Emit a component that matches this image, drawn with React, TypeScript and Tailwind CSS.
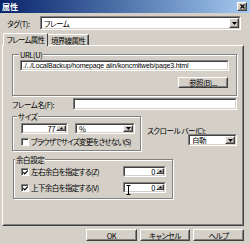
import React from "react";

const FONT = "font-['Noto_Sans_CJK_JP',sans-serif] [font-feature-settings:'palt']";

function Sunken({ className = "", inner = "", children }: { className?: string; inner?: string; children?: React.ReactNode }) {
  return (
    <div className={`border border-t-[#808080] border-l-[#808080] border-b-white border-r-white ${className}`}>
      <div className={`h-full w-full border border-t-[#404040] border-l-[#404040] border-b-[#d4d0c8] border-r-[#d4d0c8] bg-white flex items-center overflow-hidden ${inner}`}>
        {children}
      </div>
    </div>
  );
}

function Raised({ className = "", children }: { className?: string; children?: React.ReactNode }) {
  return (
    <div className={`border border-t-[#ffffff] border-l-[#ffffff] border-b-[#404040] border-r-[#404040] bg-[#d4d0c8] ${className}`}>
      <div className="h-full w-full border border-t-[#d4d0c8] border-l-[#d4d0c8] border-b-[#808080] border-r-[#808080] flex items-center justify-center">
        {children}
      </div>
    </div>
  );
}

function Arrow({ up = false, w = 5 }: { up?: boolean; w?: number }) {
  const h = Math.ceil(w / 2);
  return (
    <svg width={w} height={h} viewBox={`0 0 ${w} ${h}`} className="block">
      {up ? (
        <polygon points={`0,${h} ${w},${h} ${w / 2},0`} fill="#000" />
      ) : (
        <polygon points={`0,0 ${w},0 ${w / 2},${h}`} fill="#000" />
      )}
    </svg>
  );
}

function Combo({ className = "", text }: { className?: string; text: string }) {
  return (
    <Sunken className={className} inner="justify-between">
      <span className="pl-[2px] whitespace-nowrap">{text}</span>
      <Raised className="w-[10px] h-full shrink-0">
        <Arrow w={5} />
      </Raised>
    </Sunken>
  );
}

function Spinner({ className = "" }: { className?: string }) {
  return (
    <div className={`flex flex-col ${className}`}>
      <Raised className="flex-1">
        <Arrow up w={3} />
      </Raised>
      <Raised className="flex-1">
        <Arrow w={3} />
      </Raised>
    </div>
  );
}

function NumberField({ className = "", value, inputW, spinW }: { className?: string; value: string; inputW: string; spinW: string }) {
  return (
    <div className={`flex ${className}`}>
      <Sunken className={`${inputW} h-full`} inner="justify-end">
        <span className="pr-[1px]">{value}</span>
        <Spinner className={`${spinW} h-full shrink-0`} />
      </Sunken>
    </div>
  );
}

function Check({ checked }: { checked: boolean }) {
  return (
    <div className="w-[8px] h-[8px] border border-t-[#808080] border-l-[#808080] border-b-white border-r-white bg-white shadow-[inset_1px_1px_0_#404040] flex items-center justify-center shrink-0">
      {checked && (
        <svg width="5" height="5" viewBox="0 0 5 5" className="block ml-[1px] mt-[1px]">
          <path d="M0.3 2.2 L1.8 3.8 L4.7 0.6" stroke="#000" strokeWidth="1.2" fill="none" />
        </svg>
      )}
    </div>
  );
}

function Group({ className = "", label, legendClass = "", children }: { className?: string; label: string; legendClass?: string; children?: React.ReactNode }) {
  return (
    <fieldset className={`min-w-0 border border-[#808080] shadow-[inset_1px_1px_0_#ffffff,1px_1px_0_#ffffff] ${className}`}>
      <legend className={`bg-[#d4d0c8] px-[1px] leading-[9px] ${legendClass}`}>{label}</legend>
      {children}
    </fieldset>
  );
}

export default function App() {
  return (
    <div className={`w-[250px] h-[244px] bg-[#d4d0c8] overflow-hidden text-black text-[7.5px] leading-[9px] tracking-[-0.4px] flex flex-col relative ${FONT}`}>
      {/* Title bar */}
      <div className="h-[13px] shrink-0 flex items-center bg-gradient-to-r from-[#0a246a] to-[#a6caf0] pl-[2px] pr-[3px]">
        <span className="text-white font-bold text-[8px] leading-[9px] tracking-normal">属性</span>
        <Raised className="ml-auto w-[10px] h-[9px]">
          <svg width="5" height="5" viewBox="0 0 5 5" className="block">
            <path d="M0.5 0.5 L4.5 4.5 M4.5 0.5 L0.5 4.5" stroke="#000" strokeWidth="1.3" />
          </svg>
        </Raised>
      </div>

      {/* Tag row */}
      <div className="mt-[3px] h-[14px] flex items-center shrink-0">
        <span className="ml-[7px] w-[33px] whitespace-nowrap">タグ(T):</span>
        <Combo className="w-[201px] h-[14px]" text="フレーム" />
      </div>

      {/* Tabs */}
      <div className="mt-[3px] h-[13px] flex items-end pl-[3px] relative z-10 shrink-0">
        <div className="w-[45px] h-[13px] bg-[#d4d0c8] border-t border-l border-t-white border-l-white border-r border-r-[#404040] rounded-tl-[2px] rounded-tr-[1px] flex items-center justify-center pb-[1px]">
          <span className="whitespace-nowrap tracking-[-0.7px]">フレーム属性</span>
        </div>
        <div className="w-[41px] h-[11px] mb-[1px] bg-[#d4d0c8] border-t border-t-white border-r border-r-[#404040] rounded-tr-[1px] flex items-center justify-center shadow-[inset_-1px_0_0_#808080]">
          <span className="whitespace-nowrap tracking-[-0.7px]">境界線属性</span>
        </div>
      </div>

      {/* Panel */}
      <div className="-mt-[1px] ml-[2px] w-[242px] h-[181px] shrink-0 border border-t-white border-l-white border-b-[#404040] border-r-[#404040]">
        <div className="w-full h-full border border-t-[#d4d0c8] border-l-[#d4d0c8] border-b-[#808080] border-r-[#808080] flex flex-col">
          {/* URL group */}
          <Group className="mt-[3px] ml-[8px] w-[225px] h-[46px] px-[7px] flex flex-col" label="URL(U)" legendClass="-ml-[1px]">
            <Sunken className="mt-[1px] w-[209px] h-[11px]">
              <span className="pl-[1px] whitespace-nowrap text-[7px] tracking-[-0.15px] font-['Liberation_Sans',sans-serif]">./../LocalBackup/homepage aiin/koncmitweb/page3.html</span>
            </Sunken>
            <div className="flex justify-end mt-[6px]">
              <Raised className="w-[50px] h-[11px] mr-[1px]">
                <span className="whitespace-nowrap">参照(B)...</span>
              </Raised>
            </div>
          </Group>

          {/* Frame name */}
          <div className="mt-[2px] h-[12px] flex items-center">
            <span className="ml-[8px] w-[61px] whitespace-nowrap">フレーム名(F):</span>
            <Sunken className="w-[164px] h-[12px]" />
          </div>

          {/* Size + scrollbar */}
          <div className="mt-[2px] flex">
            <Group className="ml-[8px] w-[129px] shrink-0 h-[39px] pl-[4px] flex flex-col" label="サイズ">
              <div className="mt-[2px] h-[11px] flex ml-[4px]">
                <NumberField className="h-full" value="77" inputW="w-[47px]" spinW="w-[10px]" />
                <Combo className="ml-[7px] w-[60px] h-full" text="%" />
              </div>
              <div className="mt-[3px] h-[9px] flex items-center ml-[4px]">
                <Check checked={false} />
                <span className="ml-[2px] whitespace-nowrap tracking-[-0.8px]">ブラウザでサイズ変更をさせない(S)</span>
              </div>
            </Group>
            <div className="ml-[6px] flex flex-col items-start">
              <span className="mt-[14px] whitespace-nowrap">スクロール バー(C):</span>
              <Combo className="-mt-[1px] ml-[41px] w-[49px] h-[12px]" text="自動" />
            </div>
          </div>

          {/* Margin group */}
          <Group className="mt-[4px] ml-[9px] w-[160px] h-[44px] pl-[1px] flex flex-col" label="余白設定">
            <div className="mt-[2px] h-[11px] flex items-center">
              <div className="ml-[6px]">
                <Check checked />
              </div>
              <span className="ml-[2px] whitespace-nowrap tracking-[-0.6px]">左右余白を指定する(Z)</span>
              <NumberField className="ml-auto mr-[6px] h-full" value="0" inputW="w-[43px]" spinW="w-[8px]" />
            </div>
            <div className="mt-[5px] h-[11px] flex items-center">
              <div className="ml-[6px]">
                <Check checked />
              </div>
              <span className="ml-[2px] whitespace-nowrap tracking-[-0.6px]">上下余白を指定する(V)</span>
              <NumberField className="ml-auto mr-[6px] h-full" value="0" inputW="w-[43px]" spinW="w-[8px]" />
            </div>
          </Group>
        </div>
      </div>

      {/* Buttons */}
      <div className="mt-[3px] h-[12px] flex pl-[86px] gap-[3px] shrink-0">
        <Raised className="w-[51px] h-full"><span>OK</span></Raised>
        <Raised className="w-[50px] h-full"><span className="whitespace-nowrap">キャンセル</span></Raised>
        <Raised className="w-[51px] h-full"><span className="whitespace-nowrap">ヘルプ</span></Raised>
      </div>

      {/* I-beam mouse cursor */}
      <svg width="5" height="10" viewBox="0 0 5 10" className="absolute left-[126px] top-[185px]">
        <path d="M0.5 0.5 H4.5 M2.5 0.5 V9.5 M0.5 9.5 H4.5" stroke="#000" strokeWidth="1" fill="none" />
      </svg>
    </div>
  );
}
